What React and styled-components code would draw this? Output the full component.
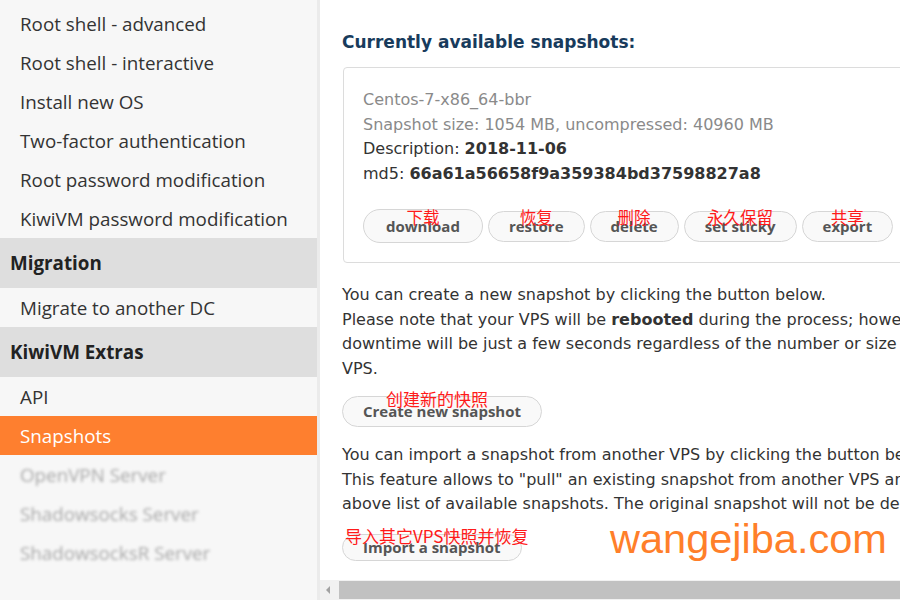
import React from "react";
import styled, { createGlobalStyle, css } from "styled-components";

const GlobalStyle = createGlobalStyle`
  html, body {
    margin: 0;
    padding: 0;
    background: #fff;
  }
  body {
    width: 900px;
    height: 600px;
    overflow: hidden;
  }
`;

const sideItems = [
  "Root shell - advanced",
  "Root shell - interactive",
  "Install new OS",
  "Two-factor authentication",
  "Root password modification",
  "KiwiVM password modification",
];

const snapshotActions = [
  { label: "download", note: "下载", focus: true },
  { label: "restore", note: "恢复" },
  { label: "delete", note: "删除" },
  { label: "set sticky", note: "永久保留" },
  { label: "export", note: "共享" },
];

const App = () => {
  return (
    <>
      <GlobalStyle />
      <Page>
        <Sidebar>
          {sideItems.map((item) => (
            <NavItem key={item}>{item}</NavItem>
          ))}
          <NavHeader>Migration</NavHeader>
          <NavItem>Migrate to another DC</NavItem>
          <NavHeader>KiwiVM Extras</NavHeader>
          <NavItem>API</NavItem>
          <NavItem $active>Snapshots</NavItem>
          <NavItem $blurred>OpenVPN Server</NavItem>
          <NavItem $blurred>Shadowsocks Server</NavItem>
          <NavItem $blurred>ShadowsocksR Server</NavItem>
        </Sidebar>

        <Main>
          <Content>
            <Title>Currently available snapshots:</Title>
            <SnapshotCard>
              <InfoLine $muted>Centos-7-x86_64-bbr</InfoLine>
              <InfoLine $muted>Snapshot size: 1054 MB, uncompressed: 40960 MB</InfoLine>
              <InfoLine>
                Description: <b>2018-11-06</b>
              </InfoLine>
              <InfoLine>
                md5: <b>66a61a56658f9a359384bd37598827a8</b>
              </InfoLine>
              <ActionRow>
                {snapshotActions.map((a) => (
                  <PillButton key={a.label} $focus={a.focus}>
                    {a.label}
                    <Note $top={a.focus ? -1 : -3}>{a.note}</Note>
                  </PillButton>
                ))}
              </ActionRow>
            </SnapshotCard>

            <Paragraph $above={20} $below={15}>
              You can create a new snapshot by clicking the button below.
              <br />
              Please note that your VPS will be <b>rebooted</b> during the process; however, the
              <br />
              downtime will be just a few seconds regardless of the number or size of files on your
              <br />
              VPS.
            </Paragraph>
            <PillButton>
              Create new snapshot
              <Note $top={-7} $left={43} $size={17}>
                创建新的快照
              </Note>
            </PillButton>

            <Paragraph $above={16} $below={17}>
              You can import a snapshot from another VPS by clicking the button below.
              <br />
              This feature allows to "pull" an existing snapshot from another VPS and add it to the
              <br />
              above list of available snapshots. The original snapshot will not be deleted.
            </Paragraph>
            <PillButton $short>
              Import a snapshot
              <Note $top={-8} $left={2} $size={17}>
                导入其它VPS快照并恢复
              </Note>
            </PillButton>
          </Content>

          <Watermark>wangejiba.com</Watermark>

          <ScrollBar>
            <ScrollArrow />
            <ScrollThumb />
          </ScrollBar>
        </Main>
      </Page>
    </>
  );
};

// Styled components
const Page = styled.div`
  display: flex;
  width: 900px;
  height: 600px;
  overflow: hidden;
`;

const Sidebar = styled.nav`
  width: 317px;
  flex-shrink: 0;
  background: #f7f7f7;
  border-right: 3px solid #ebebeb;
  padding-top: 4px;
  font-family: "Open Sans", "Noto Sans", sans-serif;
`;

const NavItem = styled.div`
  height: 39px;
  display: flex;
  align-items: center;
  padding-left: 20px;
  font-size: 18.8px;
  color: #333;
  white-space: nowrap;

  ${(p) =>
    p.$active &&
    css`
      background: #fe7f2f;
      color: #fff;
    `}

  ${(p) =>
    p.$blurred &&
    css`
      color: #a8a8a8;
      filter: blur(1.8px);
    `}
`;

const NavHeader = styled.div`
  height: 50px;
  display: flex;
  align-items: center;
  padding-left: 10px;
  background: #dedede;
  font-size: 18.8px;
  font-weight: 700;
  color: #222;
`;

const Main = styled.main`
  flex: 1;
  min-width: 0;
  display: flex;
  flex-direction: column;
  position: relative;
  background: #fff;
`;

const Content = styled.div`
  flex: 1;
  overflow: hidden;
  padding: 31px 0 0 22px;
  font-family: "DejaVu Sans", Verdana, sans-serif;
  font-size: 16px;
  line-height: 24.5px;
  color: #333;
`;

const Title = styled.h2`
  margin: 0 0 14px;
  font-size: 17px;
  line-height: 22px;
  font-weight: 700;
  color: #183b5c;
  white-space: nowrap;
`;

const SnapshotCard = styled.div`
  width: 640px;
  margin-left: 1px;
  border: 1px solid #dcdcdc;
  border-radius: 4px;
  padding: 20px 0 19px 19px;
`;

const InfoLine = styled.div`
  white-space: nowrap;
  color: ${(p) => (p.$muted ? "#8a8a8a" : "#333")};

  b {
    color: #333;
  }
`;

const ActionRow = styled.div`
  display: flex;
  align-items: center;
  gap: 5px;
  margin-top: 23px;
`;

const PillButton = styled.button`
  position: relative;
  display: inline-flex;
  align-items: center;
  justify-content: center;
  height: ${(p) => (p.$focus ? "34px" : p.$short ? "27px" : "31px")};
  padding: 0 ${(p) => (p.$focus ? "22px" : "20px")};
  border: 1px solid #d6d6d6;
  border-radius: 17px;
  background: #f9f9f9;
  color: #555;
  font-family: "Open Sans", "Noto Sans", sans-serif;
  font-size: 15px;
  font-weight: 700;
  line-height: 1;
  white-space: nowrap;
  cursor: pointer;
`;

const Note = styled.span`
  position: absolute;
  top: ${(p) => p.$top}px;
  left: ${(p) => (p.$left != null ? `${p.$left}px` : "50%")};
  transform: ${(p) => (p.$left != null ? "none" : "translateX(-50%)")};
  color: #ff1a1a;
  font-family: "Noto Sans CJK SC", "Noto Sans", sans-serif;
  font-size: ${(p) => p.$size || 16.5}px;
  font-weight: 400;
  line-height: 1;
  white-space: nowrap;
`;

const Paragraph = styled.p`
  margin: ${(p) => p.$above}px 0 ${(p) => p.$below}px;
  white-space: nowrap;
`;

const Watermark = styled.div`
  position: absolute;
  left: 290px;
  top: 518px;
  font-family: "Liberation Sans", Arial, sans-serif;
  font-size: 41.5px;
  line-height: 1;
  color: #ff7f2a;
  white-space: nowrap;
`;

const ScrollBar = styled.div`
  height: 20px;
  flex-shrink: 0;
  display: flex;
  align-items: center;
  background: #f1f1f1;
`;

const ScrollArrow = styled.div`
  width: 0;
  height: 0;
  margin: 0 9px 0 6px;
  border-top: 4px solid transparent;
  border-bottom: 4px solid transparent;
  border-right: 4px solid #a3a3a3;
`;

const ScrollThumb = styled.div`
  flex: 1;
  height: 18px;
  background: #c1c1c1;
`;

export default App;
